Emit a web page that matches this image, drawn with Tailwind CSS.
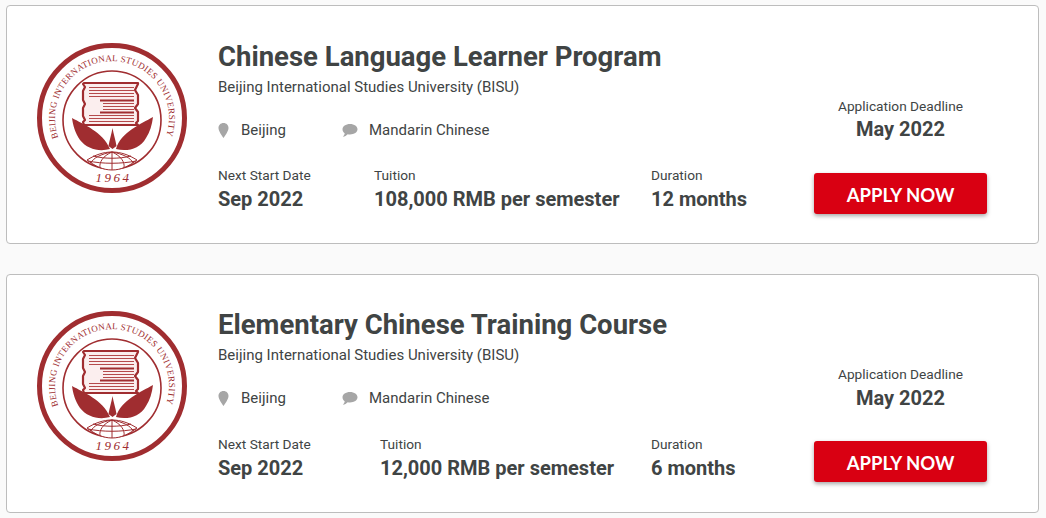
<!DOCTYPE html>
<html lang="en">
<head>
  <meta charset="UTF-8" />
  <meta name="viewport" content="width=device-width, initial-scale=1.0" />
  <title>Chinese Programs</title>
  <script src="https://cdn.jsdelivr.net/npm/@tailwindcss/browser@4"></script>
</head>
<body class="bg-[#fafafa] h-[518px] overflow-hidden font-['Roboto',sans-serif] text-[#404444]">

  <svg width="0" height="0" class="absolute">
    <defs>
      <symbol id="bisu" viewBox="0 0 150 150" overflow="visible">
        <circle cx="75" cy="76" r="72.500" fill="none" stroke="#a02d30" stroke-width="5" />
        <circle cx="75" cy="78" r="49" fill="none" stroke="#a02d30" stroke-width="1.600" />
        <path id="arc" d="M21.400 95.500A57 57 0 1 1 128.600 95.500" fill="none" />
        <text font-family="'Liberation Serif',serif" font-size="9" fill="#a02d30" textLength="216">
          <textPath href="#arc">BEIJING INTERNATIONAL STUDIES UNIVERSITY</textPath>
        </text>
        <text x="76.500" y="140" text-anchor="middle" font-family="'Liberation Serif',serif" font-style="italic" font-size="13" letter-spacing="2.500" fill="#a02d30">1964</text>
        <!-- book -->
        <path d="M47 41h54v1l-3 6 3 5v9l-3 4 3 4v9l-2 2 2 2H47l-1-3 2-2-2-4v-8l2-4-2-4v-9l2-4-2-3z" fill="#fbeeee" stroke="#a02d30" stroke-width="2.200" stroke-linejoin="round" />
        <g stroke="#b54a4c" stroke-width="1.200">
          <path d="M52 45.500h45M52 48.500h45M52 51.500h45M52 54.500h45M66 61.500h31M66 64.500h31M66 67.500h31M52 73.500h45M52 76.500h45M52 79.500h45" />
        </g>
        <path d="M63 58.500h34M63 70.500h34" stroke="#a02d30" stroke-width="1.800" />
        <!-- leaves -->
        <path d="M35 76C46 82 66 90 73 107 62 110 50 107 43 98 38 91 36 83 35 76z" fill="#a02d30" />
        <path d="M116 75C104 82 84 90 79 107 90 110 103 107 109 96 113 90 115 83 116 75z" fill="#a02d30" />
        <path d="M75.500 86c1 6 3 12 4 18l-4 3-4-3c1-6 3-12 4-18z" fill="#a02d30" />
        <!-- globe -->
        <g fill="#fff" stroke="#a02d30" stroke-width="1">
          <path d="M50 118C58 113 66 110 75 110S92 113 100 118C92 124 84 128 75 128S58 124 50 118z" />
          <path fill="none" d="M75 110v18M75 110C66 114 62 120 63 126M75 110C84 114 88 120 87 126M75 110C64 112 56 116 54 121M75 110C86 112 94 116 96 121M56 114C68 117 82 117 94 114M51 119C66 122 84 122 99 119" />
        </g>
      </symbol>
    </defs>
  </svg>

  <div class="flex flex-col gap-[30px] pt-[5px] pl-[6px] pr-[7px]">

    <!-- Card 1 -->
    <div class="flex h-[239px] bg-white border border-[#bdbdbd] rounded-[4px]">
      <svg class="w-[150px] h-[150px] ml-[30px] mt-[36px] shrink-0 overflow-visible"><use href="#bisu" /></svg>
      <div class="ml-[31px] pt-[35px] flex-1">
        <h2 class="text-[27.500px] leading-[32px] font-bold">Chinese Language Learner Program</h2>
        <p class="text-[15px] leading-[20px] mt-[4px]">Beijing International Studies University (BISU)</p>
        <div class="flex items-center mt-[23px] text-[15px] leading-[20px]">
          <svg class="w-[11px] h-[15px]" viewBox="0 0 11 15"><path d="M5.500 0C2.500 0 .5 2.200.5 5c0 3.300 3.200 7.200 5 10 1.800-2.800 5-6.700 5-10 0-2.800-2-5-5-5z" fill="#a6a6a6" /></svg>
          <span class="ml-[12px] w-[56px]">Beijing</span>
          <svg class="ml-[45px] w-[16px] h-[13px]" viewBox="0 0 16 13"><path d="M8 0c4.300 0 7.500 2.300 7.500 5.200S12.300 10.400 8 10.400c-.8 0-1.600-.1-2.300-.2C4.600 11.400 2.800 12.500.8 12.800c1-1 1.700-2.300 1.900-3.600C1.300 8.300.5 6.900.5 5.200.5 2.300 3.700 0 8 0z" fill="#a6a6a6" /></svg>
          <span class="ml-[11px]">Mandarin Chinese</span>
        </div>
        <div class="flex mt-[25px]">
          <div class="w-[156px]">
            <p class="text-[13.700px] leading-[20px]">Next Start Date</p>
            <p class="text-[20px] leading-[28px] font-bold">Sep 2022</p>
          </div>
          <div class="w-[277px]">
            <p class="text-[13.700px] leading-[20px]">Tuition</p>
            <p class="text-[20px] leading-[28px] font-bold">108,000 RMB per semester</p>
          </div>
          <div>
            <p class="text-[13.700px] leading-[20px]">Duration</p>
            <p class="text-[20px] leading-[28px] font-bold">12 months</p>
          </div>
        </div>
      </div>
      <div class="w-[173px] mr-[51px] shrink-0 pt-[90px] flex flex-col items-center">
        <p class="text-[13.700px] leading-[20px]">Application Deadline</p>
        <p class="text-[20px] leading-[28px] font-bold -mt-[1px]">May 2022</p>
        <button class="mt-[30px] w-full h-[41px] pt-[4px] bg-[#d90012] text-white font-['Lato',sans-serif] font-bold text-[18.500px] rounded-[3px] shadow-[0_2px_4px_rgba(0,0,0,0.35)]">APPLY NOW</button>
      </div>
    </div>

    <!-- Card 2 -->
    <div class="flex h-[239px] bg-white border border-[#bdbdbd] rounded-[4px]">
      <svg class="w-[150px] h-[150px] ml-[30px] mt-[35px] shrink-0 overflow-visible"><use href="#bisu" /></svg>
      <div class="ml-[31px] pt-[34px] flex-1">
        <h2 class="text-[27.500px] leading-[32px] font-bold">Elementary Chinese Training Course</h2>
        <p class="text-[15px] leading-[20px] mt-[4px]">Beijing International Studies University (BISU)</p>
        <div class="flex items-center mt-[23px] text-[15px] leading-[20px]">
          <svg class="w-[11px] h-[15px]" viewBox="0 0 11 15"><path d="M5.500 0C2.500 0 .5 2.200.5 5c0 3.300 3.200 7.200 5 10 1.800-2.800 5-6.700 5-10 0-2.800-2-5-5-5z" fill="#a6a6a6" /></svg>
          <span class="ml-[12px] w-[56px]">Beijing</span>
          <svg class="ml-[45px] w-[16px] h-[13px]" viewBox="0 0 16 13"><path d="M8 0c4.300 0 7.500 2.300 7.500 5.200S12.300 10.400 8 10.400c-.8 0-1.600-.1-2.300-.2C4.600 11.400 2.800 12.500.8 12.800c1-1 1.700-2.300 1.900-3.600C1.300 8.300.5 6.900.5 5.200.5 2.300 3.700 0 8 0z" fill="#a6a6a6" /></svg>
          <span class="ml-[11px]">Mandarin Chinese</span>
        </div>
        <div class="flex mt-[26px]">
          <div class="w-[162px]">
            <p class="text-[13.700px] leading-[20px]">Next Start Date</p>
            <p class="text-[20px] leading-[28px] font-bold">Sep 2022</p>
          </div>
          <div class="w-[271px]">
            <p class="text-[13.700px] leading-[20px]">Tuition</p>
            <p class="text-[20px] leading-[28px] font-bold">12,000 RMB per semester</p>
          </div>
          <div>
            <p class="text-[13.700px] leading-[20px]">Duration</p>
            <p class="text-[20px] leading-[28px] font-bold">6 months</p>
          </div>
        </div>
      </div>
      <div class="w-[173px] mr-[51px] shrink-0 pt-[89px] flex flex-col items-center">
        <p class="text-[13.700px] leading-[20px]">Application Deadline</p>
        <p class="text-[20px] leading-[28px] font-bold">May 2022</p>
        <button class="mt-[29px] w-full h-[41px] pt-[4px] bg-[#d90012] text-white font-['Lato',sans-serif] font-bold text-[18.500px] rounded-[3px] shadow-[0_2px_4px_rgba(0,0,0,0.35)]">APPLY NOW</button>
      </div>
    </div>

  </div>
</body>
</html>
